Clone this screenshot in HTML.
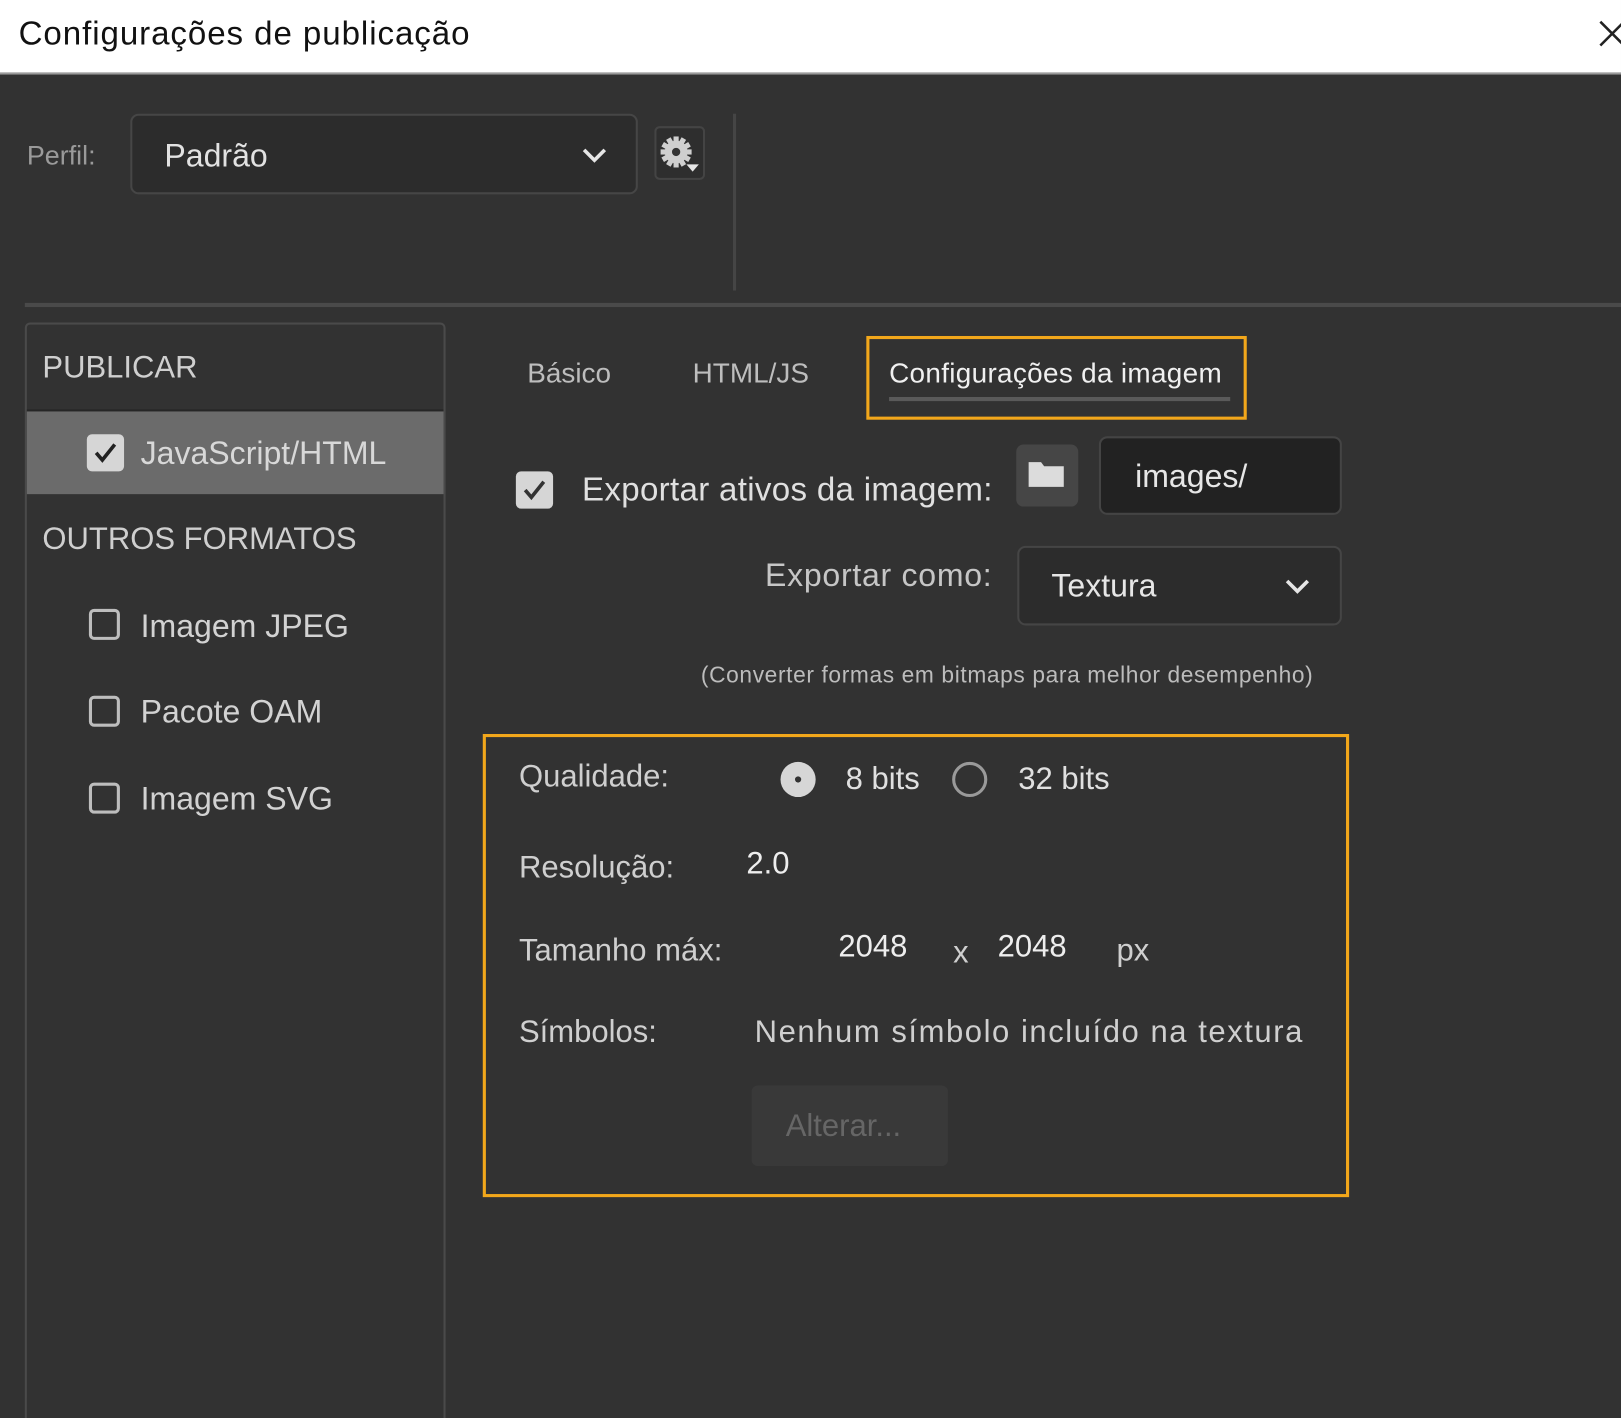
<!DOCTYPE html>
<html><head><meta charset="utf-8">
<style>
html,body{margin:0;padding:0;background:#323232;overflow:hidden}
#w{position:absolute;left:0;top:0;width:1568px;height:1372px;transform:scale(1.0338);transform-origin:0 0;background:#323232;font-family:"Liberation Sans",sans-serif;color:#d2d2d2;overflow:hidden}
.a{position:absolute;white-space:nowrap}
.t{position:absolute;white-space:nowrap;line-height:1}
.cb{position:absolute;width:30px;height:30px;border:3px solid #bdbdbd;border-radius:5px;box-sizing:border-box}
.cbc{position:absolute;width:36px;height:36px;background:#d6d6d6;border-radius:5px}
</style></head><body><div id="w">
<div class="a" style="left:0;top:0;width:1568px;height:70px;background:#fff;border-bottom:2px solid #9a9a9a"></div>
<div class="t" style="left:18px;top:16px;font-size:32px;color:#111;letter-spacing:0.9px">Configurações de publicação</div>
<svg class="a" style="left:1545px;top:18px" width="30" height="30"><path d="M3 3L26 26M26 3L3 26" stroke="#222" stroke-width="2.5"/></svg>

<div class="t" style="left:26px;top:137px;font-size:26px;color:#9a9a9a">Perfil:</div>
<div class="a" style="left:126px;top:110px;width:491px;height:78px;box-sizing:border-box;border:2px solid #464646;border-radius:8px;background:#2c2c2c"></div>
<div class="t" style="left:159px;top:135px;font-size:31px;color:#e2e2e2">Padrão</div>
<svg class="a" style="left:562px;top:142px" width="26" height="18"><path d="M3 3L13 13L23 3" fill="none" stroke="#e6e6e6" stroke-width="3.5"/></svg>
<div class="a" style="left:633px;top:122px;width:49px;height:52px;box-sizing:border-box;border:2px solid #444;border-radius:5px;background:#2e2e2e"></div>
<svg class="a" style="left:636px;top:128px" width="44" height="44" viewBox="0 0 44 44">
<g transform="translate(18,19)" fill="#cfcfcf">
<circle r="11"/>
<g><rect x="-2.5" y="-15" width="5" height="30"/><rect x="-2.5" y="-15" width="5" height="30" transform="rotate(30)"/><rect x="-2.5" y="-15" width="5" height="30" transform="rotate(60)"/><rect x="-2.5" y="-15" width="5" height="30" transform="rotate(90)"/><rect x="-2.5" y="-15" width="5" height="30" transform="rotate(120)"/><rect x="-2.5" y="-15" width="5" height="30" transform="rotate(150)"/></g>
<circle r="4" fill="#333"/></g>
<path d="M28 31L40 31L34 38Z" fill="#e6e6e6"/></svg>
<div class="a" style="left:709px;top:110px;width:3px;height:171px;background:#454545"></div>
<div class="a" style="left:24px;top:293px;width:1544px;height:4px;background:#4a4a4a"></div>

<div class="a" style="left:24px;top:312px;width:407px;height:1070px;box-sizing:border-box;border:2px solid #4a4a4a;border-radius:5px 5px 0 0"></div>
<div class="t" style="left:41px;top:341px;font-size:30px;color:#cfcfcf">PUBLICAR</div>
<div class="a" style="left:26px;top:396px;width:403px;height:2px;background:#262626"></div>
<div class="a" style="left:26px;top:398px;width:403px;height:80px;background:#6b6b6b"></div>
<div class="cbc" style="left:84px;top:420px"></div>
<svg class="a" style="left:84px;top:420px" width="36" height="36"><path d="M9 18L15 25L27 10" fill="none" stroke="#222" stroke-width="3.5"/></svg>
<div class="t" style="left:136px;top:423px;font-size:31px;color:#d8d8d8">JavaScript/HTML</div>
<div class="t" style="left:41px;top:507px;font-size:30px;color:#cfcfcf">OUTROS FORMATOS</div>
<div class="cb" style="left:86px;top:589px"></div>
<div class="t" style="left:136px;top:590px;font-size:31px">Imagem JPEG</div>
<div class="cb" style="left:86px;top:673px"></div>
<div class="t" style="left:136px;top:673px;font-size:31px">Pacote OAM</div>
<div class="cb" style="left:86px;top:757px"></div>
<div class="t" style="left:136px;top:757px;font-size:31px">Imagem SVG</div>

<div class="t" style="left:510px;top:348px;font-size:27px;color:#bdbdbd">Básico</div>
<div class="t" style="left:670px;top:348px;font-size:27px;color:#bdbdbd">HTML/JS</div>
<div class="t" style="left:860px;top:348px;font-size:27px;color:#f0f0f0;letter-spacing:0.3px">Configurações da imagem</div>
<div class="a" style="left:860px;top:384px;width:330px;height:4px;background:#5a5a5a"></div>
<div class="a" style="left:838px;top:325px;width:368px;height:81px;box-sizing:border-box;border:3px solid #f2a71b"></div>

<div class="cbc" style="left:499px;top:456px"></div>
<svg class="a" style="left:499px;top:456px" width="36" height="36"><path d="M9 18L15 25L27 10" fill="none" stroke="#333" stroke-width="3.5"/></svg>
<div class="t" style="left:563px;top:457px;font-size:32px;color:#e0e0e0;letter-spacing:0.3px">Exportar ativos da imagem:</div>
<div class="a" style="left:983px;top:430px;width:60px;height:60px;background:#464646;border-radius:7px"></div>
<svg class="a" style="left:993px;top:441px" width="40" height="34"><path d="M2 6h12l3 4h19v20H2Z" fill="#dcdcdc"/></svg>
<div class="a" style="left:1063px;top:422px;width:235px;height:76px;box-sizing:border-box;border:2px solid #444;border-radius:8px;background:#222"></div>
<div class="t" style="left:1098px;top:445px;font-size:31px;color:#e6e6e6">images/</div>
<div class="t" style="left:740px;top:541px;font-size:31px;color:#c6c6c6;letter-spacing:0.7px">Exportar como:</div>
<div class="a" style="left:984px;top:528px;width:314px;height:77px;box-sizing:border-box;border:2px solid #454545;border-radius:8px;background:#2c2c2c"></div>
<div class="t" style="left:1017px;top:551px;font-size:31px;color:#e6e6e6">Textura</div>
<svg class="a" style="left:1242px;top:559px" width="26" height="18"><path d="M3 3L13 13L23 3" fill="none" stroke="#e6e6e6" stroke-width="3.5"/></svg>
<div class="t" style="left:678px;top:642px;font-size:22px;color:#bcbcbc;letter-spacing:0.6px">(Converter formas em bitmaps para melhor desempenho)</div>

<div class="a" style="left:467px;top:710px;width:838px;height:448px;box-sizing:border-box;border:3px solid #f2a71b"></div>
<div class="t" style="left:502px;top:737px;font-size:30px;color:#cfcfcf">Qualidade:</div>
<div class="a" style="left:755px;top:737px;width:34px;height:34px;border-radius:50%;background:#d6d6d6"></div>
<div class="a" style="left:769px;top:751px;width:6px;height:6px;border-radius:50%;background:#333"></div>
<div class="t" style="left:818px;top:739px;font-size:30px;color:#e0e0e0">8 bits</div>
<div class="a" style="left:921px;top:737px;width:34px;height:34px;box-sizing:border-box;border-radius:50%;border:3px solid #9a9a9a"></div>
<div class="t" style="left:985px;top:739px;font-size:30px;color:#e0e0e0">32 bits</div>
<div class="t" style="left:502px;top:825px;font-size:30px;color:#cfcfcf">Resolução:</div>
<div class="t" style="left:722px;top:821px;font-size:30px;color:#eee">2.0</div>
<div class="t" style="left:502px;top:905px;font-size:30px;color:#cfcfcf">Tamanho máx:</div>
<div class="t" style="left:811px;top:901px;font-size:30px;color:#eee">2048</div>
<div class="t" style="left:922px;top:907px;font-size:30px;color:#cfcfcf">x</div>
<div class="t" style="left:965px;top:901px;font-size:30px;color:#eee">2048</div>
<div class="t" style="left:1080px;top:905px;font-size:30px;color:#cfcfcf">px</div>
<div class="t" style="left:502px;top:984px;font-size:30px;color:#cfcfcf">Símbolos:</div>
<div class="t" style="left:730px;top:984px;font-size:30px;color:#cfcfcf;letter-spacing:1.5px">Nenhum símbolo incluído na textura</div>
<div class="a" style="left:727px;top:1050px;width:190px;height:78px;background:#393939;border-radius:6px"></div>
<div class="t" style="left:760px;top:1075px;font-size:30px;color:#666">Alterar...</div>
</div></body></html>
